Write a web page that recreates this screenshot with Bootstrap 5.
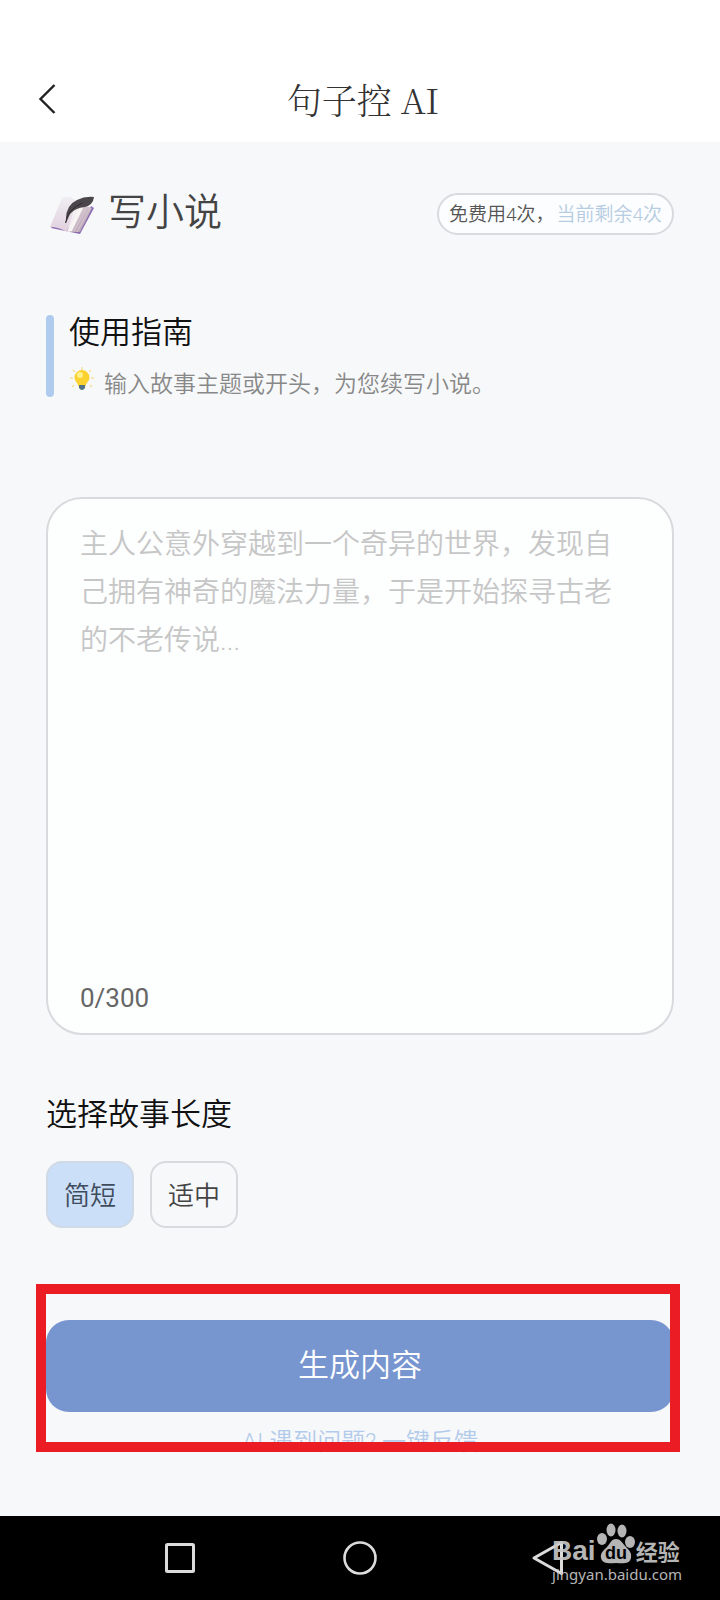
<!DOCTYPE html>
<html lang="zh-CN">
<head>
<meta charset="utf-8">
<meta name="viewport" content="width=device-width, initial-scale=1">
<title>句子控 AI</title>
<link href="https://cdn.jsdelivr.net/npm/bootstrap@5.3.0/dist/css/bootstrap.min.css" rel="stylesheet">
<style>
  body { background: #f7f8fa; color: #111; font-family: Roboto, "Noto Sans CJK SC", sans-serif; font-weight: 350; }
  .page-gutter { padding-left: 46px; padding-right: 46px; }
  .app-header { height: 142px; padding: 60px 32px 0; background: #fff; }
  .app-header .side { width: 32px; height: 40px; color: #222; }
  .app-title { font: 300 35px/40px "Noto Serif CJK SC", "Liberation Serif", "Noto Sans CJK SC", serif; color: #333; padding: 3px 0 0 6px; }
  .tool-row { padding-top: 48px; }
  .tool-name { font-size: 38px; line-height: 44px; color: #444; font-weight: 350; padding-bottom: 4px; }
  .quota { height: 42px; border: 2px solid #d8dadd; padding: 2px 10px 0; font-size: 19px; line-height: 36px; background: #fcfdfe; color: #555; }
  .quota .left-count { color: #b5cce2; padding-left: 2px; }
  .guide { margin-top: 77px; gap: 15px; }
  .guide-bar { width: 8px; background: #afcbee; }
  .section-title { font-size: 31px; line-height: 36px; font-weight: 350; }
  .guide-hint { font-size: 23px; line-height: 32px; margin-top: 14px; color: #888; gap: 9px; }
  .guide-hint svg { margin-top: 2px; }
  .guide-hint span { padding-top: 4px; margin-bottom: -4px; }
  .story-card { margin-top: 100px; height: 538px; border: 2px solid #d8dadd; border-radius: 36px; padding: 22px 32px 19px; background: #fdfefe; }
  .story-input, .story-input:focus { font-size: 28px; line-height: 48px; padding: 0 24px 0 0; border: 0; resize: none; background: transparent; box-shadow: none; font-weight: 350; }
  .story-input::placeholder { color: #c6c6c7; opacity: 1; }
  .counter { font-size: 26px; line-height: 32px; color: #666; }
  .length-title { margin-top: 62px; }
  .length-options { margin-top: 28px; gap: 16px; }
  .length-options .btn { width: 88px; height: 67px; padding: 0; border: 2px solid #d8dadd; border-radius: 16px; font-size: 26px; line-height: 66px; color: #444; font-weight: 350; }
  .length-options .btn-check:checked + .btn { background: #cbdff8; border-color: #d0dae7; color: #3f4c5e; }
  .submit-area { margin-top: 56px; height: 168px; padding-top: 36px; margin-bottom: 63px; }
  .submit-btn, .submit-btn:hover { height: 92px; border-radius: 23px; background: #7795cf; color: #fff; font-size: 31px; font-weight: 350; border: 0; }
  .feedback { margin-top: 14px; font-size: 24px; line-height: 32px; color: #b3cbea; }
  .highlight-frame { top: 0; bottom: 0; left: -10px; right: -6px; border: 10px solid #eb1c24; pointer-events: none; }
  .system-nav { height: 84px; padding: 0 90px; background: #000; }
  .system-nav .btn { flex: 1 1 0; padding: 0; border: 0; line-height: 1; }
  .watermark { right: 38px; bottom: 16px; color: #c9c9c9; font-family: "Noto Sans", sans-serif; font-size: 15px; line-height: 20px; font-weight: 400; opacity: .9; }
  .brand-line { height: 38px; }
  .brand-latin { font: bold 28px/26px "Liberation Sans", sans-serif; }
  .brand-cjk { font: bold 22px/27px "Noto Sans CJK SC", sans-serif; }
</style>
</head>
<body>
<div class="d-flex flex-column min-vh-100">
  <header class="app-header d-flex align-items-start">
    <button type="button" class="btn side p-0 border-0 mt-3 d-flex" aria-label="返回">
      <svg width="32" height="46" viewBox="0 0 32 46" fill="none" stroke="currentColor" stroke-width="2.4"><path d="M22.500 9 8.500 23l14 14"/></svg>
    </button>
    <h1 class="app-title flex-grow-1 text-center mb-0 mt-3">句子控 AI</h1>
    <span class="side"></span>
  </header>

  <main class="page-gutter">
    <div class="tool-row d-flex align-items-center justify-content-between">
      <div class="d-flex align-items-center">
        <svg width="62" height="46" viewBox="0 0 62 46" aria-hidden="true">
          <defs>
            <linearGradient id="leaf" x1="0" y1="0" x2="0" y2="1"><stop offset="0" stop-color="#efeef2"/><stop offset="1" stop-color="#e2cfdf"/></linearGradient>
            <linearGradient id="edge" x1="0" y1="0" x2="1" y2="1"><stop offset="0" stop-color="#eee6e8"/><stop offset="1" stop-color="#a88fa8"/></linearGradient>
          </defs>
          <path d="M5 37 34 43 48 17 45 15 33 39 7 34z" fill="#8a6bb0"/>
          <path d="M4 36 16 7q9-3 15 4L21 41q-8-5-17-5z" fill="url(#leaf)"/>
          <path d="M21 41 33 13 46 17 34 41z" fill="url(#edge)"/>
          <path d="M21 41 33 14 38 15 26 40z" fill="#f8f4f3"/>
          <path d="M28 40 41 16M31 41 44 17" fill="none" stroke="#d9c9d0" stroke-width="1"/>
          <path d="M20 28q0-14 11-19 8-4 17-3-1 8-9 10-10 1-15 7l-4 9z" fill="#4b464a"/>
          <path d="M19.500 32q2-14 17-20" fill="none" stroke="#2f2b30" stroke-width="1"/>
        </svg>
        <h2 class="tool-name mb-0">写小说</h2>
      </div>
      <div class="quota rounded-pill">免费用4次，<span class="left-count">当前剩余4次</span></div>
    </div>

    <section class="guide d-flex">
      <div class="guide-bar rounded-pill"></div>
      <div>
        <h3 class="section-title mb-0">使用指南</h3>
        <div class="guide-hint d-flex">
          <svg width="26" height="26" viewBox="0 0 26 26" aria-hidden="true">
            <g stroke="#f5dfa0" stroke-width="1.500"><path d="M13 0v3M4 3l2 2M22 3l-2 2M1 11h3M22 11h3M3 20l2-2M23 20l-2-2"/></g>
            <path d="M13 3a7.500 7.500 0 0 1 7.500 7.500c0 4-3.500 5-4 9h-7c-.5-4-4-5-4-9A7.500 7.500 0 0 1 13 3z" fill="#fbd22f"/>
            <circle cx="11" cy="8" r="3" fill="#fff08a"/>
            <path d="M10 18h6v3q-3 4-6 0z" fill="#527383"/>
          </svg>
          <span>输入故事主题或开头，为您续写小说。</span>
        </div>
      </div>
    </section>

    <div class="story-card d-flex flex-column">
      <textarea id="story" class="form-control story-input flex-grow-1" maxlength="300" aria-label="故事主题或开头" placeholder="主人公意外穿越到一个奇异的世界，发现自己拥有神奇的魔法力量，于是开始探寻古老的不老传说..."></textarea>
      <div class="counter fw-normal">0/300</div>
    </div>

    <h3 class="section-title length-title mb-0" id="length-label">选择故事长度</h3>
    <div class="length-options d-flex" role="radiogroup" aria-labelledby="length-label">
      <input type="radio" class="btn-check" name="length" id="short" checked>
      <label class="btn" for="short">简短</label>
      <input type="radio" class="btn-check" name="length" id="medium">
      <label class="btn" for="medium">适中</label>
    </div>

    <div class="submit-area position-relative">
      <button type="button" class="btn submit-btn w-100">生成内容</button>
      <div class="feedback text-center"><a href="#" class="text-reset text-decoration-none">AI 遇到问题? 一键反馈</a></div>
      <div class="highlight-frame position-absolute"></div>
    </div>
  </main>

  <nav class="system-nav d-flex align-items-center position-relative mt-auto">
    <button type="button" class="btn" aria-label="最近任务"><svg width="32" height="32" viewBox="0 0 32 32" fill="none" stroke="#dcdcdc" stroke-width="3"><rect x="2.500" y="2.500" width="27" height="27" rx="1"/></svg></button>
    <button type="button" class="btn" aria-label="主页"><svg width="34" height="34" viewBox="0 0 34 34" fill="none" stroke="#dcdcdc" stroke-width="2.600"><circle cx="17" cy="17" r="15.500"/></svg></button>
    <button type="button" class="btn" aria-label="返回上一级"><svg width="48" height="36" viewBox="0 0 48 36" fill="none" stroke="#dcdcdc" stroke-width="3" stroke-linejoin="round"><path d="M18 18 45.500 2.500v31z"/></svg></button>
    <div class="watermark position-absolute">
      <div class="brand-line d-flex align-items-end">
        <span class="brand-latin">Bai</span>
        <svg width="40" height="42" viewBox="0 0 40 42" aria-label="du">
          <g fill="#c9c9c9"><ellipse cx="6" cy="17" rx="5" ry="6"/><ellipse cx="15" cy="8" rx="4.500" ry="6.500"/><ellipse cx="26" cy="9" rx="4.500" ry="6.500"/><ellipse cx="34" cy="20" rx="5" ry="6"/>
          <path d="M20 17c5 0 7 5 10 8s6 6 5 11-6 6-15 5c-8 1-14 0-15-5s3-8 6-11 4-8 9-8z"/></g>
          <text x="20" y="37" text-anchor="middle" font-family="Liberation Sans" font-size="18" font-weight="bold" fill="#000">du</text>
        </svg>
        <span class="brand-cjk">经验</span>
      </div>
      <div>jingyan.baidu.com</div>
    </div>
  </nav>
</div>
<script src="https://cdn.jsdelivr.net/npm/bootstrap@5.3.0/dist/js/bootstrap.bundle.min.js"></script>
</body>
</html>
